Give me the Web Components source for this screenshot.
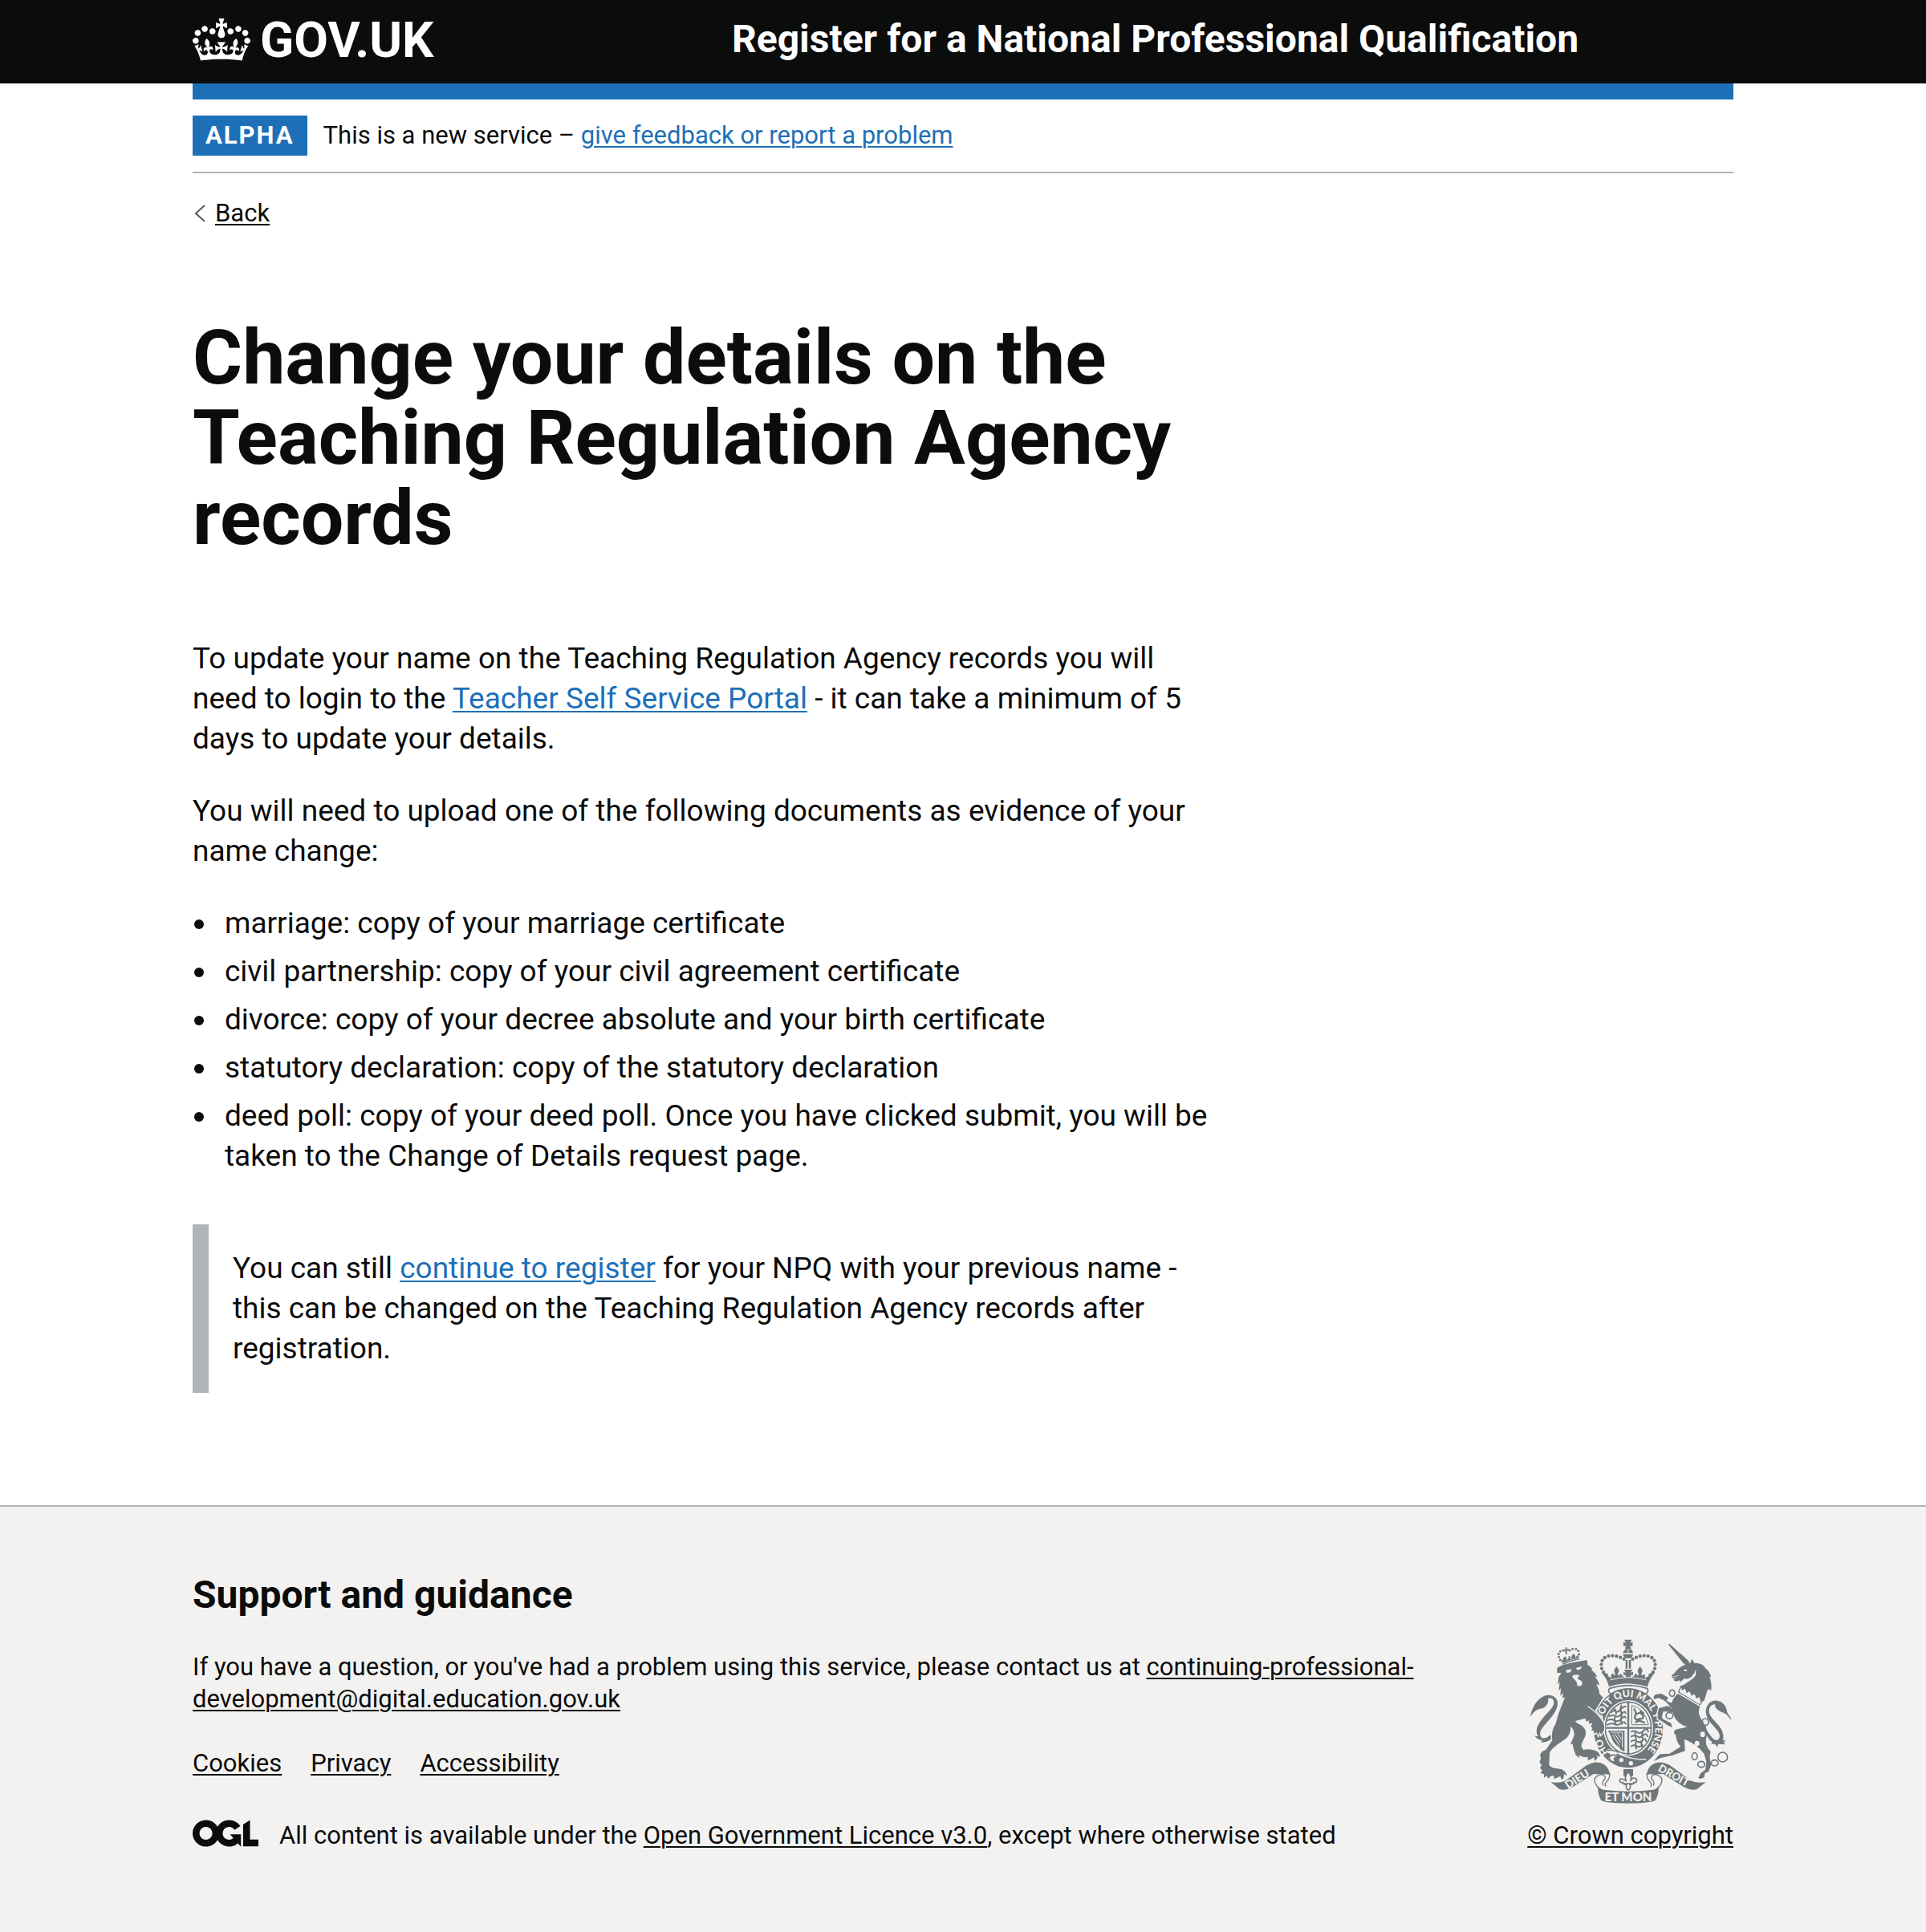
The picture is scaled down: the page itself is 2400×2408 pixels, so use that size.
<!DOCTYPE html>
<html lang="en">
<head>
<meta charset="utf-8">
<meta name="viewport" content="width=device-width, initial-scale=1">
<title>Change your details - Register for a National Professional Qualification</title>
<style>
  :root {
    --ink: #0b0c0c;
    --link: #1d70b8;
    --rule: #b1b4b6;
    --panel: #f3f2f1;
    --crest: #6f777b;
    --page: 1920px;
    --size-xl: 95px;
    --size-m: 48px;
    --size-body: 37px;
    --size-s: 31px;
  }
  body {
    margin: 0;
    color: var(--ink);
    background: var(--panel);
    font-family: Roboto, "Liberation Sans", Arial, sans-serif;
    font-size: var(--size-body);
    line-height: 50px;
  }
</style>
</head>
<body>
<npq-page></npq-page>

<script>
const define = (name, markup) => {
  const template = document.createElement('template');
  template.innerHTML = markup;
  customElements.define(name, class extends HTMLElement {
    constructor() {
      super();
      this.attachShadow({ mode: 'open' }).append(template.content.cloneNode(true));
    }
  });
};

/* Centred column shared by the header, the main content and the footer */
define('npq-container', `
<style>
  :host { display: block; box-sizing: border-box; max-width: var(--page); margin: 0 auto; }
</style>
<slot></slot>`);

define('npq-crown', `
<style>
  :host { display: block; }
  svg { display: block; width: 72px; height: 53px; fill: currentColor; }
</style>
<svg viewBox="0 0 132 97" aria-hidden="true"><path d="M25 30.2c3.5 1.5 7.7-.2 9.1-3.7 1.5-3.6-.2-7.8-3.9-9.2-3.6-1.4-7.6.3-9.1 3.9-1.4 3.5.3 7.5 3.9 9zM9 39.5c3.6 1.5 7.8-.2 9.2-3.7 1.5-3.6-.2-7.8-3.9-9.1-3.6-1.5-7.6.2-9.1 3.8-1.4 3.5.3 7.5 3.8 9zM4.4 57.2c3.5 1.5 7.7-.2 9.1-3.8 1.5-3.6-.2-7.7-3.9-9.1-3.5-1.5-7.6.3-9.1 3.8-1.4 3.5.3 7.6 3.9 9.1zm38.3-21.4c3.5 1.5 7.7-.2 9.1-3.8 1.5-3.6-.2-7.7-3.9-9.1-3.6-1.5-7.6.3-9.1 3.8-1.3 3.6.4 7.7 3.9 9.1zm64.4-5.6c-3.6 1.5-7.8-.2-9.1-3.7-1.5-3.6.2-7.8 3.8-9.2 3.6-1.4 7.7.3 9.2 3.9 1.3 3.5-.4 7.5-3.9 9zm15.9 9.3c-3.6 1.5-7.7-.2-9.1-3.7-1.5-3.6.2-7.8 3.7-9.1 3.6-1.5 7.7.2 9.2 3.8 1.5 3.5-.3 7.5-3.8 9zm4.7 17.7c-3.6 1.5-7.8-.2-9.2-3.8-1.5-3.6.2-7.7 3.9-9.1 3.6-1.5 7.7.3 9.2 3.8 1.3 3.5-.4 7.6-3.9 9.1zM89.3 35.8c-3.6 1.5-7.8-.2-9.2-3.8-1.4-3.6.2-7.7 3.9-9.1 3.6-1.5 7.7.3 9.2 3.8 1.4 3.6-.3 7.7-3.9 9.1zM69.7 17.7l8.9 4.7V9.3l-8.9 2.8c-.2-.3-.5-.6-.9-.9L72.4 0H59.6l3.5 11.2c-.3.3-.6.5-.9.9l-8.8-2.8v13.1l8.8-4.7c.3.3.6.7.9.9l-5 15.4v.1c-.2.8-.4 1.6-.4 2.4 0 4.1 3.1 7.5 7 8.1h.2c.3 0 .7.1 1 .1.4 0 .7 0 1-.1h.2c4-.6 7.1-4.1 7.1-8.1 0-.8-.1-1.7-.4-2.4V34l-5.1-15.4c.4-.2.7-.6 1-.9zM66 92.8c16.9 0 32.8 1.1 47.1 3.2 4-16.9 8.9-26.7 14-33.5l-9.6-3.4c1 4.9 1.1 7.2 0 10.2-1.5-1.4-3-4.3-4.2-8.7L108.6 76c2.8-2 5-3.2 7.5-3.3-4.4 9.4-10 11.9-13.6 11.2-4.3-.8-6.3-4.6-5.6-7.9 1-4.7 5.7-5.9 8-.5 4.3-8.7-3-11.4-7.6-8.8 7.1-7.2 7.9-13.5 2.1-21.1-8 6.1-8.1 12.3-4.5 20.8-4.7-5.4-12.1-2.5-9.5 6.2 3.4-5.2 7.9-2 7.2 3.1-.6 4.3-6.4 7.8-13.5 7.2-10.3-.9-10.9-8-11.2-13.8 2.5-.5 7.1 1.8 11 7.3L80.2 60c-4.1 4.4-8 5.3-12.3 5.4 1.4-4.4 8-11.6 8-11.6H55.5s6.4 7.2 7.9 11.6c-4.2-.1-8-1-12.3-5.4l1.4 16.4c3.9-5.5 8.5-7.7 10.9-7.3-.3 5.8-.9 12.8-11.1 13.8-7.2.6-12.9-2.9-13.5-7.2-.7-5 3.8-8.3 7.1-3.1 2.7-8.7-4.6-11.6-9.4-6.2 3.7-8.5 3.6-14.7-4.6-20.8-5.8 7.6-5 13.9 2.2 21.1-4.7-2.6-11.9.1-7.7 8.8 2.3-5.5 7.1-4.2 8.1.5.7 3.3-1.3 7.1-5.7 7.9-3.5.7-9-1.8-13.5-11.2 2.5.1 4.7 1.3 7.5 3.3l-4.7-15.4c-1.2 4.4-2.7 7.2-4.3 8.7-1.1-3-.9-5.3 0-10.2l-9.5 3.4c5 6.9 9.9 16.7 14 33.5 14.8-2.1 30.8-3.2 47.7-3.2z"/></svg>`);

define('npq-header', `
<style>
  :host { display: block; background: var(--ink); color: #fff; }
  .bar { display: flex; align-items: flex-start; min-height: 104px; }
  .logo { flex: 0 0 35%; }
  .logo a { display: inline-flex; align-items: flex-start; gap: 12px; padding-top: 23px; font-size: 62px; line-height: 53px; }
  a { color: inherit; text-decoration: none; font-weight: 700; }
  .service { font-size: var(--size-m); line-height: 50px; padding-top: 24px; }
</style>
<header>
  <npq-container>
    <div class="bar">
      <div class="logo"><a href="#home"><npq-crown></npq-crown><span>GOV.UK</span></a></div>
      <a class="service" href="#service"><slot></slot></a>
    </div>
  </npq-container>
</header>`);

define('npq-phase-banner', `
<style>
  :host { display: flex; align-items: center; gap: 20px; padding: 20px 0; border-top: 20px solid var(--link); border-bottom: 2px solid var(--rule); font-size: var(--size-s); line-height: 40px; }
  strong { padding: 5px 16px; background: var(--link); color: #fff; letter-spacing: 2px; text-transform: uppercase; }
</style>
<strong><slot name="tag"></slot></strong>
<span><slot></slot></span>`);

define('npq-link', `
<style>
  :host { display: inline; color: var(--link); }
  :host([plain]) { color: var(--ink); }
  a { color: inherit; text-decoration: underline; text-decoration-thickness: 2px; text-underline-offset: 3px; }
</style>
<a href="#"><slot></slot></a>`);

define('npq-back-link', `
<style>
  :host { display: flex; align-items: center; gap: 12px; margin-top: 30px; font-size: var(--size-s); line-height: 40px; }
  svg { display: block; width: 16px; height: 24px; fill: none; stroke: #505a5f; stroke-width: 2; }
</style>
<svg viewBox="0 0 16 24" aria-hidden="true"><path d="M15 2 4 12l11 10"/></svg>
<npq-link plain><slot></slot></npq-link>`);

define('npq-title', `
<style>
  :host { display: block; margin: 110px 0 100px; }
  h1 { margin: 0; font-size: var(--size-xl); line-height: 100px; font-weight: 700; }
</style>
<h1><slot></slot></h1>`);

define('npq-text', `
<style>
  :host { display: block; margin-bottom: 40px; }
  p { margin: 0; }
</style>
<p><slot></slot></p>`);

define('npq-documents', `
<style>
  ul { display: grid; gap: 10px; margin: 0 0 60px; padding: 0; list-style: none; }
  li { display: flex; gap: 26px; }
  li::before { content: ""; flex: none; width: 12px; height: 12px; margin: 20px 0 0 2px; border-radius: 50%; background: currentColor; }
</style>
<ul>
  <li>marriage: copy of your marriage certificate</li>
  <li>civil partnership: copy of your civil agreement certificate</li>
  <li>divorce: copy of your decree absolute and your birth certificate</li>
  <li>statutory declaration: copy of the statutory declaration</li>
  <li>deed poll: copy of your deed poll. Once you have clicked submit, you will be taken to the Change of Details request page.</li>
</ul>`);

define('npq-inset', `
<style>
  :host { display: block; padding: 30px; border-left: 20px solid var(--rule); }
</style>
<slot></slot>`);

define('npq-ogl', `
<style>
  :host { display: block; }
  svg { display: block; width: 82px; height: 34px; fill: currentColor; }
</style>
<svg viewBox="0 0 483.2 195.7" aria-hidden="true"><path d="M421.5 142.8V.1l-50.7 32.3v161.1h112.4v-50.7zm-122.3-9.6A47.12 47.12 0 0 1 221 97.8c0-26 21.1-47.1 47.1-47.1 16.7 0 31.4 8.7 39.7 21.8l42.7-27.2A97.63 97.63 0 0 0 268.1 0c-36.5 0-68.3 20.1-85.1 49.7A98 98 0 0 0 97.8 0C43.9 0 0 43.9 0 97.8s43.9 97.8 97.8 97.8c36.5 0 68.3-20.1 85.1-49.7a97.76 97.76 0 0 0 149.6 25.4l19.4 22.2h3v-87.8h-80l24.3 27.5zM97.8 145c-26 0-47.1-21.1-47.1-47.1s21.1-47.1 47.1-47.1 47.1 21.1 47.1 47.1S123.8 145 97.8 145"/></svg>`);

/* Royal coat of arms; one unit is a third of a pixel */
define('npq-crest', `
<style>
  :host { display: block; }
  svg { display: block; width: 250px; height: 205px; }
  .f { fill: var(--crest); }
  .over { stroke: var(--panel); stroke-width: 8; paint-order: stroke; }
  .h { fill: var(--panel); }
  .s, .w { fill: none; stroke: var(--crest); stroke-linecap: round; stroke-linejoin: round; }
  .w { stroke: var(--panel); }
  .beads { fill: none; stroke: var(--crest); stroke-width: 13; stroke-linecap: round; stroke-dasharray: 0 15; }
  .small { stroke-width: 9; stroke-dasharray: 0 12; }
  text { fill: var(--panel); font-family: Lato, sans-serif; font-weight: 900; }
</style>
<svg viewBox="72 70 750 615" stroke-width="5" aria-hidden="true">
  <!-- central crown -->
  <path class="f" d="M423 72H451L444 84L454 80V98L444 94L449 106H425L430 94L420 98V80L430 84ZM418 122Q422 106 438 106Q454 106 456 122ZM418 126H456Q454 142 438 142Q420 142 418 126ZM428 148H435V180H428ZM440 148H448V180H440Z"/>
  <path class="w" d="M438 108V120" stroke-width="3"/>
  <path class="beads" d="M356 204C334 190 332 156 346 142C364 126 400 130 424 146"/>
  <path class="beads" d="M520 204C542 190 544 156 530 142C512 126 476 130 452 146"/>
  <path class="f" d="M352 196L362 208L376 216C370 206 376 196 384 200L384 208L390 200C382 190 384 184 394 172C404 184 406 190 398 200L404 208C404 198 414 196 416 208L430 214C430 206 426 202 420 204V192L430 196L422 184H454L446 196L456 192V204C450 202 446 206 446 214L460 208C462 196 472 198 472 208L478 200C470 190 472 184 482 172C492 184 494 190 486 200L492 208C494 196 504 198 500 216L514 208L522 196L534 200C522 214 514 230 510 248Q438 224 366 248C362 230 354 214 342 200Z"/>
  <path class="w" d="M372 222Q438 204 504 222" stroke-width="3"/>
  <path class="s" d="M368 254Q438 232 508 254Q518 268 500 276M368 254Q358 268 376 276"/>
  <!-- garter and shield -->
  <ellipse class="f" cx="438" cy="402" rx="130" ry="149"/>
  <ellipse class="h" cx="438" cy="402" rx="93" ry="104"/>
  <ellipse class="s" cx="438" cy="402" rx="86" ry="97"/>
  <path class="s" d="M438 306V500M352 402H524" stroke-width="7"/>
  <path class="s" d="M452 318Q496 326 514 390H452Z" stroke-width="3"/>
  <path class="s" d="M374 344Q382 334 390 340T408 334T428 322M366 358Q380 352 390 358T412 350T428 346M360 374Q372 366 386 374T412 368T428 364M360 390Q374 382 388 388T412 384T428 386M384 330Q394 336 392 350M412 318Q406 332 412 346M388 360Q384 376 392 390M414 352Q408 370 414 388" stroke-width="6"/>
  <path class="s" d="M450 416Q462 410 472 418T496 412T512 416M450 434Q462 426 472 434T494 430T510 434M450 452Q460 444 470 452T492 448T504 452M450 470Q460 464 470 470T492 466M466 416Q460 430 468 444M492 416Q486 432 494 446M468 452Q462 466 468 480M490 450Q484 462 490 472" stroke-width="6"/>
  <path class="s" d="M460 332Q470 346 464 356T472 374M470 350Q484 340 492 354T480 368T498 382M484 338L494 346M466 380L482 374" stroke-width="7"/>
  <path class="f" d="M362 412H424V490Q408 486 404 474Q382 464 372 430Z"/>
  <path class="w" d="M374 418H416V474M380 428L404 466M388 424L408 456M398 422L412 444" stroke-width="3"/>
  <path class="h" d="M372 500Q350 492 362 480Q384 482 396 488Q410 496 396 506Q376 514 386 526Q370 532 364 516Z"/>
  <path class="s" d="M362 486Q376 482 396 490Q406 498 392 504Q372 500 366 512Q368 528 388 530"/>
  <path class="w" d="M398 496Q440 520 504 520" stroke-width="4"/>
  <circle class="h" cx="412" cy="522" r="8"/><circle class="h" cx="448" cy="534" r="8"/>
  <path id="garter" fill="none" d="M364 494A101 116 0 0 1 337 402A101 116 0 0 1 539 402A101 116 0 0 1 496 497"/>
  <text font-size="37"><textPath href="#garter" startOffset="0">HO</textPath></text>
  <text font-size="37"><textPath href="#garter" startOffset="126">SOIT QUI MAL Y PENSE</textPath></text>
  <!-- lion -->
  <path class="f" d="M72 360C76 330 96 290 130 280C150 276 170 284 174 306C176 340 140 372 118 400C106 416 106 430 114 438C124 446 142 434 160 418L166 430C150 444 140 456 112 456L116 448C104 448 94 440 86 430C94 434 98 434 100 432C90 414 96 396 112 374C134 344 162 326 160 304C158 290 146 288 138 292C142 308 130 328 110 330C96 332 82 342 72 360Z"/>
  <path class="f over" d="M172 178C188 164 236 156 284 148L286 166C296 172 302 178 304 184L298 184C310 192 318 202 322 212L312 208C322 220 328 230 330 242L318 238C326 252 330 262 330 274L344 288L314 336L318 342C334 358 344 376 348 394C350 408 344 420 336 428L332 416L326 430L320 418L312 424L308 412L300 412L304 402L298 396L304 384L290 386L292 374L280 378L278 366L240 376C244 384 252 386 262 392C276 402 282 414 278 430C272 446 264 456 262 470L270 484C284 480 304 482 318 488C330 494 334 504 330 512L322 504L322 516L312 526L310 512L296 520L286 524L288 512C274 512 262 510 254 502L256 514L242 504L234 482L230 462L222 462L232 440C240 424 234 404 222 396C224 420 214 436 196 448C176 462 154 476 144 494L142 540C150 554 170 552 186 556C200 560 208 572 208 582L198 574L196 590L188 596L184 582L168 590L160 592L160 580L148 582L138 592L134 580L124 588L122 574L110 572L116 560L108 552L114 540L106 530L112 514L108 504C112 492 120 486 130 484L154 448C150 420 158 398 166 388L176 352L194 306L202 286L192 292L194 270L184 282L186 254L178 262L182 230L174 240L178 212L188 196L172 196Z"/>
  <path class="h" d="M204 186L226 182L222 194L208 196ZM242 178L264 172L260 182L248 186ZM228 208Q240 198 256 206L248 216L254 222Q266 224 266 236Q264 246 254 246Q244 244 246 232L240 224Q230 216 228 208Z"/>
  <path class="w" d="M288 322Q322 344 344 378" stroke-width="4"/>
  <path class="beads small" d="M184 148Q168 122 190 112Q198 110 204 120M254 126Q252 104 234 106Q220 108 214 118"/>
  <path class="f" d="M186 146L194 152L194 142L202 134L208 142L208 150L216 138L214 134L222 134L220 140L226 146L226 134L232 124L240 132L240 140L250 128L256 146Q224 152 194 166Z"/>
  <path class="s" d="M206 103V124M198 113L214 110" stroke-width="6"/>
  <path class="w" d="M194 160Q224 146 254 140" stroke-width="2"/>
  <!-- unicorn -->
  <path class="f" d="M588 90L592 87L664 152L668 162L676 144L686 160C704 158 722 166 726 178C738 186 744 198 748 212L742 210C748 228 750 244 748 262L738 256L732 266L722 300L630 246L646 240C660 230 676 224 690 206L686 202C674 216 660 220 646 218L632 232L632 224L616 228L606 222L616 216L604 216L600 206L612 196C620 184 632 172 652 166L644 160Z"/>
  <path class="h" d="M644 186Q650 180 660 186L652 191ZM690 184Q700 214 646 232Q684 210 690 184Z"/>
  <path class="w" d="M606 210L626 207" stroke-width="2"/>
  <path class="s" d="M634 246L626 268L706 316L718 292M640 250L646 266L660 256L664 276L680 270L684 290L698 282L704 300" stroke-width="4"/>
  <path class="h" d="M630 246L722 298L708 318L624 270Z"/>
  <path class="s" d="M634 250L626 268L706 316L718 294" stroke-width="4"/>
  <path class="f" d="M634 246L640 262L650 254L656 272L668 264L674 282L686 274L692 292L704 286L708 304L722 300V292L640 244Z"/>
  <path class="f over" d="M624 274L706 322C700 336 700 350 708 364C718 380 726 390 730 404C736 420 730 436 728 450C728 466 736 480 746 490L742 510L748 540L738 566L724 572L722 586L710 592L700 590L708 572L726 558L730 530L722 500L706 480C688 464 668 452 648 444L650 488L604 504L560 514L534 526L548 508L558 500L592 498L634 472C622 460 616 444 616 424L612 414C624 406 640 404 658 398C634 390 616 376 608 354L604 344L570 340Q562 354 566 368L586 378L598 384L602 400L584 392L568 380L548 368Q546 346 552 328L584 320L598 324C600 300 610 284 624 274Z"/>
  <path class="f over" d="M598 324L574 300L552 290L534 294Q530 282 542 276L562 274L590 290L592 306L610 316Z"/>
  <path class="f" d="M590 310L620 300L612 330L594 326Z"/>
  <path class="s" d="M616 424Q606 410 640 408" stroke-width="9"/>
  <path class="f" d="M822 374L820 362C810 350 806 342 806 334C800 312 786 302 770 300C744 298 728 316 728 344C730 376 760 394 774 416C784 432 780 446 768 448C752 448 740 420 730 410L728 424C736 436 740 448 752 454L748 464C758 458 764 462 772 474L774 462L802 464L794 458L804 446L792 450C798 424 786 404 772 388C752 366 740 356 740 338C740 322 750 314 762 314C762 332 778 340 796 346C808 352 816 362 822 374Z"/>
  <g class="s">
    <ellipse cx="602" cy="272" rx="10" ry="12"/><ellipse cx="592" cy="356" rx="13" ry="12"/>
    <ellipse cx="726" cy="380" rx="12" ry="13"/><ellipse cx="686" cy="508" rx="10" ry="13"/>
    <ellipse cx="711" cy="538" rx="13" ry="11"/><ellipse cx="761" cy="533" rx="13" ry="11"/><circle cx="791" cy="511" r="18"/>
  </g>
  <ellipse class="h" cx="716" cy="426" rx="9" ry="10"/><ellipse class="h" cx="695" cy="460" rx="9" ry="10"/><ellipse class="h" cx="588" cy="297" rx="5" ry="8"/>
  <!-- motto scroll and fleur-de-lis -->
  <path class="s" d="M368 572Q370 590 358 602Q348 610 354 620M340 576Q314 580 312 596Q312 612 328 628M340 576Q356 582 350 594Q338 602 344 616M508 572Q506 590 518 602Q528 610 522 620M536 576Q562 580 564 596Q564 612 548 628M536 576Q520 582 526 594Q538 602 532 616" stroke-width="4"/>
  <path class="f" d="M148 604Q176 610 202 600L282 542Q320 520 350 540Q366 552 370 578Q354 572 340 576L308 574L228 624Q200 638 180 630Z"/>
  <path class="f" d="M728 604Q700 610 674 600L594 542Q556 520 526 540Q510 552 506 578Q522 572 536 576L568 574L648 624Q676 638 696 630Z"/>
  <path class="f" d="M324 620Q336 634 352 634Q438 644 524 634Q540 634 552 620Q552 650 540 672Q530 682 438 684Q346 682 336 672Q324 650 324 620Z"/>
  <path id="dieu" fill="none" d="M213 631L340 551"/><path id="droit" fill="none" d="M547 561L700 646"/>
  <text font-size="41"><textPath href="#dieu">DIEU</textPath></text>
  <text font-size="40"><textPath href="#droit">DROIT</textPath></text>
  <text x="438" y="676" font-size="45" text-anchor="middle">ET MON</text>
  <path class="f" d="M420 556H456V582H420Z"/>
  <path class="s" d="M438 566C450 578 452 588 446 600C450 588 470 584 470 600Q468 608 458 606Q462 612 444 614L446 620Q444 634 438 634Q430 632 430 620L432 614Q414 612 418 606Q408 608 406 600Q406 584 430 600C424 588 426 578 438 566ZM420 610H456" style="fill:var(--panel)"/>
</svg>`);

define('npq-footer', `
<style>
  :host { display: block; padding: 80px 0 100px; border-top: 2px solid var(--rule); background: var(--panel); font-size: var(--size-s); line-height: 40px; }
  .meta { display: flex; align-items: flex-end; gap: 60px; }
  .info { flex: 1; }
  h2 { margin: 0 0 40px; font-size: var(--size-m); line-height: 60px; font-weight: 700; }
  p { margin: 0 0 40px; }
  ul { display: flex; gap: 36px; margin: 0 0 50px; padding: 0; list-style: none; }
  .licence { display: flex; align-items: flex-start; gap: 26px; }
  .crown { display: grid; justify-items: center; gap: 20px; }
</style>
<footer>
  <npq-container>
    <div class="meta">
      <div class="info">
        <h2>Support and guidance</h2>
        <p>If you have a question, or you've had a problem using this service, please contact us at <npq-link plain>continuing-professional-development@digital.education.gov.uk</npq-link></p>
        <ul>
          <li><npq-link plain>Cookies</npq-link></li>
          <li><npq-link plain>Privacy</npq-link></li>
          <li><npq-link plain>Accessibility</npq-link></li>
        </ul>
        <div class="licence"><npq-ogl></npq-ogl><span>All content is available under the <npq-link plain>Open Government Licence v3.0</npq-link>, except where otherwise stated</span></div>
      </div>
      <div class="crown"><npq-crest></npq-crest><npq-link plain>© Crown copyright</npq-link></div>
    </div>
  </npq-container>
</footer>`);

define('npq-page', `
<style>
  :host { display: block; }
  .body { background: #fff; padding-bottom: 140px; }
  main { width: 66%; }
</style>
<npq-header>Register for a National Professional Qualification</npq-header>
<div class="body">
  <npq-container>
    <npq-phase-banner><span slot="tag">Alpha</span>This is a new service – <npq-link>give feedback or report a problem</npq-link></npq-phase-banner>
    <npq-back-link>Back</npq-back-link>
    <main>
      <npq-title>Change your details on the Teaching Regulation Agency records</npq-title>
      <npq-text>To update your name on the Teaching Regulation Agency records you will need to login to the <npq-link>Teacher Self Service Portal</npq-link> - it can take a minimum of 5 days to update your details.</npq-text>
      <npq-text>You will need to upload one of the following documents as evidence of your name change:</npq-text>
      <npq-documents></npq-documents>
      <npq-inset>You can still <npq-link>continue to register</npq-link> for your NPQ with your previous name - this can be changed on the Teaching Regulation Agency records after registration.</npq-inset>
    </main>
  </npq-container>
</div>
<npq-footer></npq-footer>`);
</script>
</body>
</html>
